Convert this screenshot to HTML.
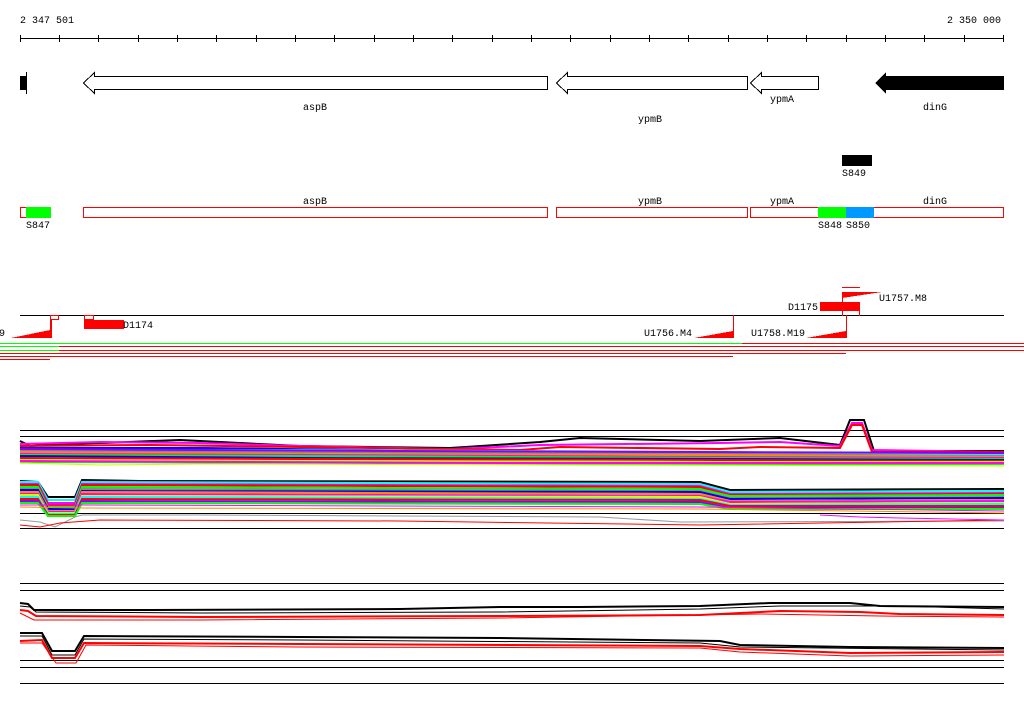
<!DOCTYPE html>
<html><head><meta charset="utf-8"><style>
html,body{margin:0;padding:0;background:#fff;}
svg{display:block;}
text{font-family:"Liberation Mono","DejaVu Sans Mono",monospace;font-size:10px;fill:#000;}
</style></head><body>
<svg width="1024" height="714" viewBox="0 0 1024 714" xmlns="http://www.w3.org/2000/svg" shape-rendering="crispEdges">
<!-- ruler -->
<text x="20" y="23">2 347 501</text>
<text x="1001" y="23" text-anchor="end">2 350 000</text>
<line x1="20" y1="38.5" x2="1004" y2="38.5" stroke="#000"/>
<g stroke="#000">
<line x1="20.5" y1="35" x2="20.5" y2="42"/><line x1="59.5" y1="35" x2="59.5" y2="42"/><line x1="98.5" y1="35" x2="98.5" y2="42"/><line x1="138.5" y1="35" x2="138.5" y2="42"/><line x1="177.5" y1="35" x2="177.5" y2="42"/><line x1="216.5" y1="35" x2="216.5" y2="42"/><line x1="256.5" y1="35" x2="256.5" y2="42"/><line x1="295.5" y1="35" x2="295.5" y2="42"/><line x1="334.5" y1="35" x2="334.5" y2="42"/><line x1="374.5" y1="35" x2="374.5" y2="42"/><line x1="413.5" y1="35" x2="413.5" y2="42"/><line x1="452.5" y1="35" x2="452.5" y2="42"/><line x1="492.5" y1="35" x2="492.5" y2="42"/><line x1="531.5" y1="35" x2="531.5" y2="42"/><line x1="570.5" y1="35" x2="570.5" y2="42"/><line x1="610.5" y1="35" x2="610.5" y2="42"/><line x1="649.5" y1="35" x2="649.5" y2="42"/><line x1="688.5" y1="35" x2="688.5" y2="42"/><line x1="728.5" y1="35" x2="728.5" y2="42"/><line x1="767.5" y1="35" x2="767.5" y2="42"/><line x1="806.5" y1="35" x2="806.5" y2="42"/><line x1="846.5" y1="35" x2="846.5" y2="42"/><line x1="885.5" y1="35" x2="885.5" y2="42"/><line x1="924.5" y1="35" x2="924.5" y2="42"/><line x1="964.5" y1="35" x2="964.5" y2="42"/><line x1="1003.5" y1="35" x2="1003.5" y2="42"/>
</g>
<!-- gene arrows -->
<rect x="20" y="76" width="6" height="14" fill="#000"/>
<line x1="26.5" y1="72" x2="26.5" y2="94" stroke="#000"/>
<polygon points="83.5,83 94.5,72.5 94.5,76.5 547.5,76.5 547.5,89.5 94.5,89.5 94.5,93.5" fill="#fff" stroke="#000"/>
<polygon points="556.5,83 567.5,72.5 567.5,76.5 747.5,76.5 747.5,89.5 567.5,89.5 567.5,93.5" fill="#fff" stroke="#000"/>
<polygon points="750.5,83 761.5,72.5 761.5,76.5 818.5,76.5 818.5,89.5 761.5,89.5 761.5,93.5" fill="#fff" stroke="#000"/>
<polygon points="875,83 886,72 886,76 1004,76 1004,90 886,90 886,94" fill="#000"/>
<text x="315" y="110" text-anchor="middle">aspB</text>
<text x="650" y="122" text-anchor="middle">ypmB</text>
<text x="782" y="102" text-anchor="middle">ypmA</text>
<text x="935" y="110" text-anchor="middle">dinG</text>
<rect x="842" y="155" width="30" height="11" fill="#000"/>
<text x="842" y="176">S849</text>
<!-- segment boxes -->
<text x="315" y="204" text-anchor="middle">aspB</text>
<text x="650" y="204" text-anchor="middle">ypmB</text>
<text x="782" y="204" text-anchor="middle">ypmA</text>
<text x="935" y="204" text-anchor="middle">dinG</text>
<rect x="20.5" y="207.5" width="30" height="10" fill="#fff" stroke="#f00"/>
<rect x="26" y="207" width="25" height="11" fill="#0f0"/>
<rect x="83.5" y="207.5" width="464" height="10" fill="#fff" stroke="#f00"/>
<rect x="556.5" y="207.5" width="191" height="10" fill="#fff" stroke="#f00"/>
<rect x="750.5" y="207.5" width="253" height="10" fill="#fff" stroke="#f00"/>
<rect x="818" y="207" width="28" height="11" fill="#0f0"/>
<rect x="846" y="207" width="28" height="11" fill="#09f"/>
<text x="26" y="228">S847</text>
<text x="818" y="228">S848</text>
<text x="846" y="228">S850</text>
<!-- features -->
<line x1="20" y1="315.5" x2="1004" y2="315.5" stroke="#000"/>
<polygon points="11,338 50,330 50,318 52,318 52,338" fill="#f00"/>
<line x1="50.5" y1="315" x2="50.5" y2="338" stroke="#f00"/>
<rect x="50.5" y="315.5" width="8" height="4" fill="#fff" stroke="#f00"/>
<rect x="84.5" y="315.5" width="9" height="4" fill="#fff" stroke="#f00"/>
<rect x="84" y="320" width="40" height="9" fill="#f00"/>
<text x="123" y="328">D1174</text>
<text x="-7" y="336">19</text>
<polygon points="694,338 733,331 733,338" fill="#f00"/>
<line x1="733.5" y1="315" x2="733.5" y2="338" stroke="#f00"/>
<text x="644" y="336">U1756.M4</text>
<polygon points="806,338 846,331 846,338" fill="#f00"/>
<line x1="846.5" y1="315" x2="846.5" y2="338" stroke="#f00"/>
<text x="751" y="336">U1758.M19</text>
<rect x="820" y="302" width="40" height="9" fill="#f00"/>
<line x1="859.5" y1="302" x2="859.5" y2="316" stroke="#f00"/>
<text x="788" y="310">D1175</text>
<polygon points="842,292 882,292 842,298" fill="#f00"/>
<line x1="842.5" y1="292" x2="842.5" y2="316" stroke="#f00"/>
<line x1="842" y1="287.5" x2="860" y2="287.5" stroke="#f00"/>
<text x="879" y="301">U1757.M8</text>
<g stroke-width="1">
<line x1="0" y1="343.5" x2="742" y2="343.5" stroke="#0f0"/><line x1="742" y1="343.5" x2="1024" y2="343.5" stroke="#f00"/>
<line x1="0" y1="346.5" x2="59" y2="346.5" stroke="#0f0"/><line x1="59" y1="346.5" x2="1024" y2="346.5" stroke="#f00"/>
<line x1="0" y1="350.5" x2="59" y2="350.5" stroke="#0f0"/><line x1="59" y1="350.5" x2="1024" y2="350.5" stroke="#f00"/>
<line x1="0" y1="353.5" x2="846" y2="353.5" stroke="#f00"/>
<line x1="0" y1="356.5" x2="733" y2="356.5" stroke="#f00"/>
<line x1="0" y1="359.5" x2="50" y2="359.5" stroke="#f00"/>
</g>
<!-- plot 1 -->
<g stroke="#000">
<line x1="20" y1="430.5" x2="1004" y2="430.5"/><line x1="20" y1="436.5" x2="1004" y2="436.5"/>
<line x1="20" y1="513.5" x2="1004" y2="513.5"/><line x1="20" y1="528.5" x2="1004" y2="528.5"/>
</g>
<g fill="none" stroke-width="2" shape-rendering="auto">
<polyline stroke="#000" points="20,441 30,446 60,444 100,443 180,440 300,446 450,448 540,442 580,438 700,441 780,438 840,445 850,420 864,420 874,451 1004,451"/>
<polyline stroke="#f0f" points="20,444 100,442 200,443 300,446 450,449 520,446 540,445 720,443 780,442 840,446 852,423 862,423 872,450 1004,452"/>
<polyline stroke="#f00" points="20,446 150,445 300,447 520,450 560,447 720,449 760,447 840,448 852,425 862,425 872,452 1004,452"/>
<polyline stroke="#00f" points="20,448 200,448 520,452 1004,454"/>
<polyline stroke="#0ff" points="20,450 300,450 720,452 1004,455"/>
<polyline stroke="#888" points="20,451 300,452 720,454 1004,456"/>
<polyline stroke="#f80" points="20,452 300,454 720,455 1004,457"/>
<polyline stroke="#f0f" points="20,454 300,455 720,457 1004,458"/>
<polyline stroke="#0f0" points="20,455 300,456 720,458 1004,459"/>
<polyline stroke="#00f" points="20,456 300,458 720,459 1004,460"/>
<polyline stroke="#f00" points="20,458 300,459 720,460 1004,461"/>
<polyline stroke="#80f" points="20,449 400,451 1004,453"/>
<polyline stroke="#cf0" points="20,460 200,461 720,462 1004,462"/>
<polyline stroke="#0f0" points="20,462 400,463 720,464 1004,464"/>
<polyline stroke="#f0f" points="20,461 500,463 1004,463"/>
<polyline stroke="#cf0" points="20,463 100,465 200,464 1004,466" stroke-width="1"/>
<!-- band 2 -->
<polyline stroke="#000" points="20,481 38,482 48,497 75,497 82,480 140,481 700,482 730,490 1004,489"/>
<polyline stroke="#0ff" points="20,482 38,482 48,500 75,500 82,482 700,484 730,492 1004,491"/>
<polyline stroke="#f0f" points="20,484 38,484 48,503 75,503 82,484 700,486 730,494 1004,493"/>
<polyline stroke="#f00" points="20,485 38,485 48,505 75,505 82,485 700,487 730,495 1004,494"/>
<polyline stroke="#0f0" points="20,487 38,487 48,507 75,507 82,487 700,489 730,496 1004,495"/>
<polyline stroke="#888" points="20,489 38,489 48,508 75,508 82,489 700,491 730,498 1004,497"/>
<polyline stroke="#00f" points="20,490 38,490 48,509 75,509 82,491 700,492 730,499 1004,498"/>
<polyline stroke="#f80" points="20,492 38,492 48,511 75,511 82,492 700,494 730,501 1004,500"/>
<polyline stroke="#f0f" points="20,494 38,494 48,512 75,512 82,494 700,496 730,502 1004,501"/>
<polyline stroke="#cf0" points="20,495 38,495 48,513 75,513 82,496 700,497 730,504 1004,503"/>
<polyline stroke="#0ff" points="20,497 38,497 48,514 75,514 82,497 700,499 730,505 1004,504"/>
<polyline stroke="#f00" points="20,499 38,499 48,515 75,515 82,499 700,500 730,506 1004,506"/>
<polyline stroke="#80f" points="20,501 38,501 48,516 75,516 82,501 700,502 730,508 1004,508"/>
<polyline stroke="#0f0" points="20,503 38,503 48,516 75,516 82,503 700,504 730,509 1004,509"/>
<polyline stroke="#f0f" points="20,505 82,505 700,507 1004,511" stroke-width="1"/>
<polyline stroke="#f80" points="20,507 82,508 700,509 1004,513" stroke-width="1"/>
<polyline stroke="#999" points="20,520 40,522 55,527 75,517 82,515 200,515 600,517 680,522 1004,521" stroke-width="1"/>
<polyline stroke="#f00" points="20,525 40,527 60,523 100,520 400,521 700,525 1004,520" stroke-width="1"/>
<polyline stroke="#f0f" points="820,515 860,517 900,518 1004,520" stroke-width="1"/>
</g>
<!-- plot 2 -->
<g stroke="#000">
<line x1="20" y1="583.5" x2="1004" y2="583.5"/><line x1="20" y1="590.5" x2="1004" y2="590.5"/>
<line x1="20" y1="660.5" x2="1004" y2="660.5"/><line x1="20" y1="667.5" x2="1004" y2="667.5"/>
<line x1="20" y1="683.5" x2="1004" y2="683.5"/>
</g>
<g fill="none" shape-rendering="auto">
<polyline stroke="#000" stroke-width="2" points="20,603 28,604 34,610 150,610 400,609 500,607 580,607 700,606 770,603 850,603 880,606 1004,607"/>
<polyline stroke="#000" stroke-width="1" points="20,606 30,607 36,612 200,613 500,612 700,609 780,606 900,606 1004,609"/>
<polyline stroke="#f00" stroke-width="2" points="20,610 28,611 36,616 200,617 500,616 700,615 780,611 860,612 900,614 1004,615"/>
<polyline stroke="#f00" stroke-width="1" points="20,613 34,620 200,620 500,618 760,614 880,616 1004,617"/>
<polyline stroke="#000" stroke-width="2" points="20,633 42,633 52,651 75,651 84,636 300,637 500,638 720,641 740,645 850,647 1004,648"/>
<polyline stroke="#000" stroke-width="1" points="20,636 42,636 52,655 75,655 84,639 300,640 700,643 740,647 1004,650"/>
<polyline stroke="#f00" stroke-width="2" points="20,641 42,640 52,658 75,658 84,643 300,644 700,646 740,649 850,653 1004,652"/>
<polyline stroke="#f00" stroke-width="1" points="20,643 42,643 56,663 76,663 86,645 300,647 700,648 740,652 850,656 1004,655"/>
</g>
</svg>
</body></html>
